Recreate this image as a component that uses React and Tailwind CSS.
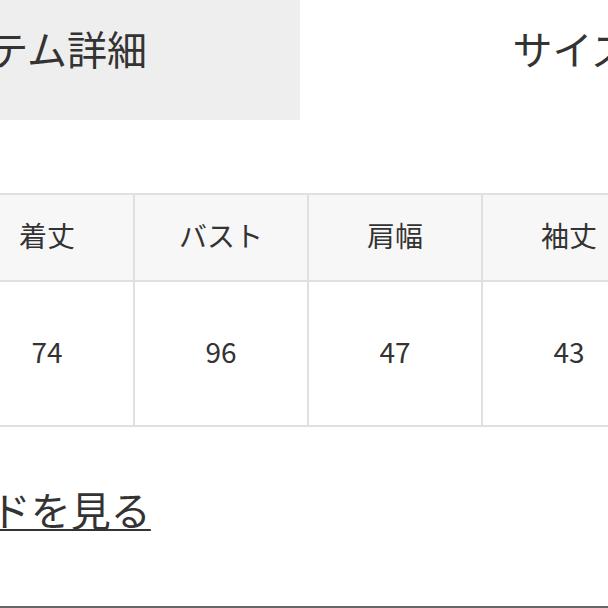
import React from "react";

const heads = ["着丈", "バスト", "肩幅", "袖丈", "裄丈"];
const vals = ["74", "96", "47", "43", "—"];

export default function App() {
  return (
    <div className="relative w-[608px] h-[608px] overflow-hidden bg-white text-[#333333] font-['Noto_Sans_CJK_JP','Noto_Sans',sans-serif]">
      <div className="flex w-[1088px] -ml-[242px] h-[120px]">
        <div className="w-[542px] bg-[#eeeeee] flex justify-center pt-[28px]">
          <span className="text-[40px] leading-[40px] whitespace-nowrap">アイテム詳細</span>
        </div>
        <div className="w-[544px] flex justify-center pt-[28px]">
          <span className="text-[40px] leading-[40px] whitespace-nowrap">サイズ</span>
        </div>
      </div>

      <div className="mt-[73px] -ml-[41px] w-[900px] grid grid-cols-[repeat(5,174px)] border-l-2 border-t-2 border-[#e0e0e0]">
        {heads.map((h) => (
          <div key={h} className="h-[87px] pb-[5px] bg-[#f7f7f7] border-r-2 border-b-2 border-[#e0e0e0] flex items-center justify-center text-[28px] leading-none">
            {h}
          </div>
        ))}
        {vals.map((v, i) => (
          <div key={i} className="h-[145px] pb-[5px] bg-white border-r-2 border-b-2 border-[#e0e0e0] flex items-center justify-center text-[28px] leading-none">
            {v}
          </div>
        ))}
      </div>

      <div className="mt-[62px] -ml-[208px] whitespace-nowrap">
        <span className="text-[40px] leading-[40px] underline decoration-2 underline-offset-[3px] decoration-[#333333]">サイズガイドを見る</span>
      </div>

      <div className="absolute left-0 right-0 bottom-0 h-[2px] bg-[#666666]" />
    </div>
  );
}
